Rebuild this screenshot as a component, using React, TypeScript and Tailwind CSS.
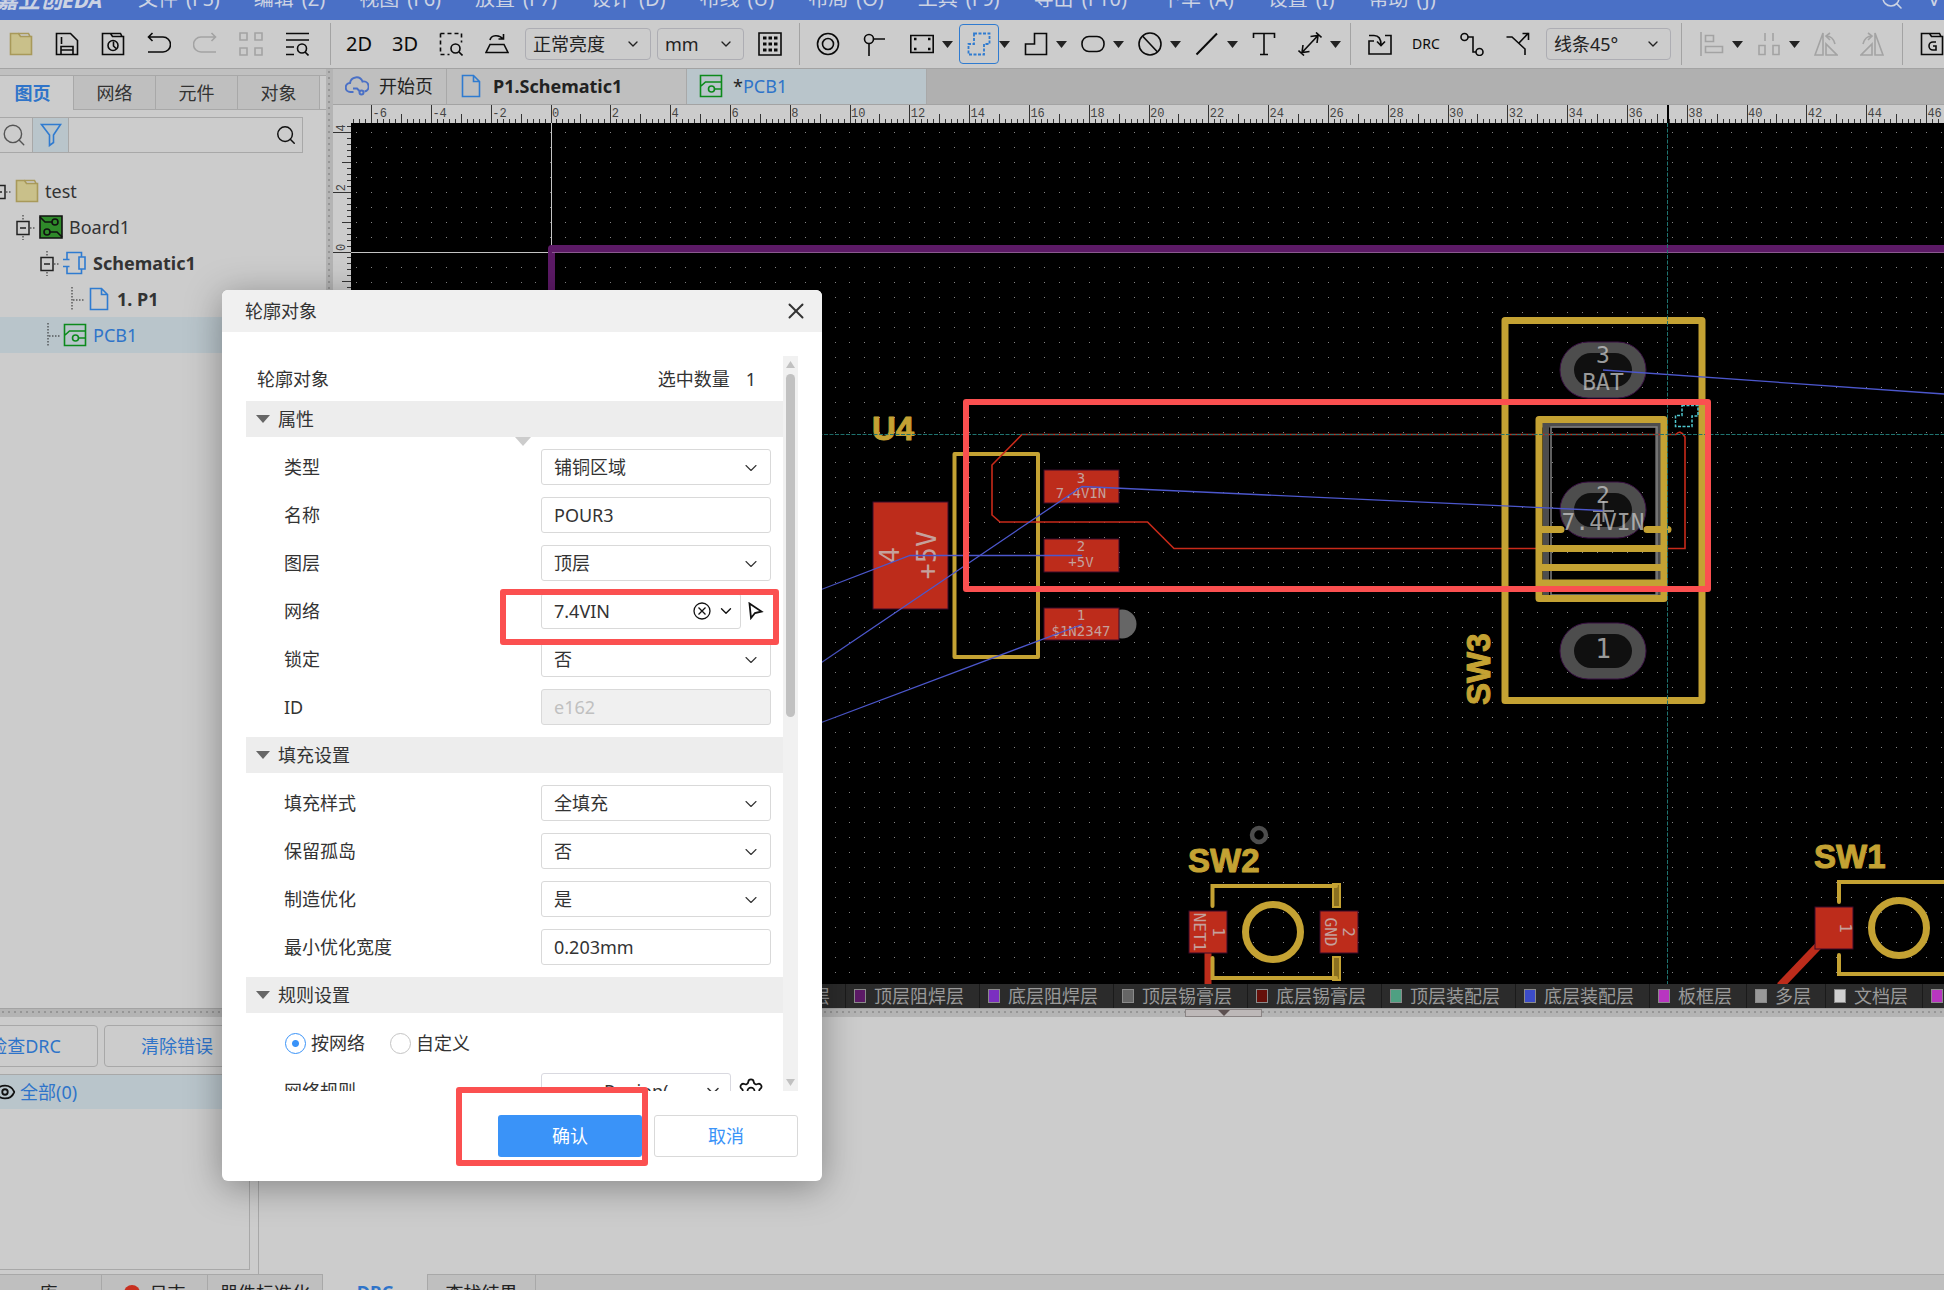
import type { ReactNode } from "react";
import { clsx } from "clsx";
import { ChevronDown, Eye, Search, Settings, X } from "lucide-react";

const MENUS = [
  ["文件", "(F5)"],
  ["编辑", "(Z)"],
  ["视图", "(F6)"],
  ["放置", "(F7)"],
  ["设计", "(D)"],
  ["布线", "(U)"],
  ["布局", "(O)"],
  ["工具", "(F9)"],
  ["导出", "(F10)"],
  ["下单", "(A)"],
  ["设置", "(I)"],
  ["帮助", "(J)"],
];

const LAYERS = [
  { name: "顶层", color: "#c02c1c" },
  { name: "底层", color: "#3040c0" },
  { name: "顶层丝印层", color: "#c4a233" },
  { name: "底层丝印层", color: "#6a7a3a" },
  { name: "顶层阻焊层", color: "#5c1a66" },
  { name: "底层阻焊层", color: "#7b2fc0" },
  { name: "顶层锡膏层", color: "#666666" },
  { name: "底层锡膏层", color: "#66100a" },
  { name: "顶层装配层", color: "#4fa082" },
  { name: "底层装配层", color: "#3c4cc8" },
  { name: "板框层", color: "#b836c0" },
  { name: "多层", color: "#999999" },
  { name: "文档层", color: "#cfcfcf" },
  { name: "机械层", color: "#b836c0" },
];

const UNIT = 29.9; // px per mm

function Glyph({ children, className }: { children: ReactNode; className?: string }) {
  return (
    <svg
      viewBox="0 0 24 24"
      className={clsx("h-6 w-6 shrink-0", className)}
      fill="none"
      stroke="currentColor"
      strokeWidth="1.6"
      aria-hidden="true"
    >
      {children}
    </svg>
  );
}

function FolderIcon() {
  return (
    <Glyph>
      <path d="M1.5 1.5h8l2 3h11v18h-21z" fill="#c9c08a" stroke="#a8995a" />
      <path d="M9.5 1.5h10l1.5 3" stroke="#a8995a" />
    </Glyph>
  );
}

function PageIcon() {
  return (
    <Glyph className="text-[#2f7bd0]">
      <path d="M3.5 1.5h11l6 6v15h-17zM14.5 1.5v6h6" />
    </Glyph>
  );
}

function PcbIcon() {
  return (
    <Glyph className="text-[#0c8a1c]">
      <path d="M1.5 1.5h21v21h-21zM1.5 12.500l5-4.500h16M15.500 15h7" />
      <circle cx="12.500" cy="15" r="3" />
    </Glyph>
  );
}

function ToolButton({ label, children, disabled, wide = true }: {
  label: string;
  children: ReactNode;
  disabled?: boolean;
  wide?: boolean;
}) {
  return (
    <button
      type="button"
      aria-label={label}
      disabled={disabled}
      className={clsx(
        "flex h-10 shrink-0 items-center justify-center",
        wide ? "w-[46px]" : "w-10",
        disabled ? "text-[#a3a3a3]" : "text-[#0a0a0a]",
      )}
    >
      {children}
    </button>
  );
}

function DropTool({ label, children, active, disabled }: {
  label: string;
  children: ReactNode;
  active?: boolean;
  disabled?: boolean;
}) {
  return (
    <div className="flex w-[57px] shrink-0 items-center">
      <button
        type="button"
        aria-label={label}
        disabled={disabled}
        className={clsx(
          "flex h-10 w-10 items-center justify-center rounded border",
          active ? "border-[#2f7bd0] text-[#2f7bd0]" : "border-transparent",
          !active && (disabled ? "text-[#a3a3a3]" : "text-[#0a0a0a]"),
        )}
      >
        {children}
      </button>
      <svg viewBox="0 0 11 7" className="h-[7px] w-[11px] shrink-0" aria-hidden="true">
        <path d="M0 0h11L5.500 7z" fill="#222" />
      </svg>
    </div>
  );
}

function Divider({ className }: { className: string }) {
  return <div className={clsx("h-[42px] w-px shrink-0 bg-[#a3a3a3]", className)} />;
}

function ToolSelect({ label, value, className }: { label: string; value: string; className: string }) {
  return (
    <div className={clsx("grid h-8 shrink-0 items-center", className)}>
      <select
        aria-label={label}
        className="col-start-1 row-start-1 h-8 w-full appearance-none rounded border border-[#adadb3] pl-[7px] text-lg leading-7 text-[#222]"
      >
        <option>{value}</option>
      </select>
      <ChevronDown
        className="pointer-events-none col-start-1 row-start-1 mr-2.5 h-4 w-4 justify-self-end text-[#222]"
        strokeWidth={2}
      />
    </div>
  );
}

function MenuBar() {
  return (
    <header className="flex h-5 shrink-0 items-end overflow-hidden bg-[#4a70c6] text-[#ccd3e3]">
      <div className="flex h-[42px] w-full shrink-0 items-center whitespace-nowrap">
        <div className="-ml-1 w-[142px] shrink-0 text-[22px] font-bold italic">嘉立创EDA</div>
        <nav className="flex gap-[34px] text-xl">
          {MENUS.map(([name, key]) => (
            <button key={name} type="button" className="flex shrink-0 gap-2">
              <span>{name}</span>
              <span>{key}</span>
            </button>
          ))}
        </nav>
        <Search className="mr-6 ml-auto h-6 w-6 shrink-0" strokeWidth={1.6} />
        <span className="mr-1 text-xl">V</span>
      </div>
    </header>
  );
}

function Toolbar() {
  return (
    <div className="flex h-[49px] shrink-0 items-center overflow-hidden border-b border-[#a3a3a3] bg-[#cccccc]">
      <div className="-ml-0.5 flex shrink-0">
        <ToolButton label="打开"><FolderIcon /></ToolButton>
        <ToolButton label="保存">
          <Glyph><path d="M1.500 1.500h14l7 7v14h-21zM6 22v-7.500h12V22M6 18h12M6.500 5v7" /></Glyph>
        </ToolButton>
        <ToolButton label="历史">
          <Glyph>
            <path d="M1.500 1.500h8l2 3h11v18h-21zM9.500 1.500h10l1.500 3M12.500 9.500v4.500l2.500 2.500" />
            <circle cx="12" cy="13.500" r="5" />
          </Glyph>
        </ToolButton>
        <ToolButton label="撤销">
          <Glyph><path d="M1 5h15a6.500 6.500 0 0 1 0 15H1M5.500 1 1.500 5l4 4" /></Glyph>
        </ToolButton>
        <ToolButton label="重做" disabled>
          <Glyph><path d="M23 5H8a6.500 6.500 0 0 0 0 15h15M18.500 1l4 4-4 4" /></Glyph>
        </ToolButton>
        <ToolButton label="对齐" disabled>
          <Glyph><path d="M1 1h7v7H1zM16 1h7v7h-7zM1 16h7v7H1zM16 16h7v7h-7z" /></Glyph>
        </ToolButton>
        <ToolButton label="查找">
          <Glyph>
            <path d="M1 1.500h23M1 8h23M1 15h8M1 22.500h8M20 20l3.500 3.500" />
            <circle cx="17" cy="16.500" r="4.500" />
          </Glyph>
        </ToolButton>
      </div>
      <Divider className="mr-[5px] ml-2.5" />
      <ToolButton label="2D视图"><span className="text-xl">2D</span></ToolButton>
      <ToolButton label="3D视图"><span className="text-xl">3D</span></ToolButton>
      <ToolButton label="框选缩放">
        <Glyph>
          <path d="M1.500 1.500h21v9M1.500 1.500v21h9" strokeDasharray="4 3" />
          <circle cx="16.500" cy="16.500" r="4.500" />
          <path d="m20 20 3.500 3.500" />
        </Glyph>
      </ToolButton>
      <ToolButton label="翻转">
        <Glyph><path d="M5 12.500h14l4 8H1zM5 8c1-5 9-6 13-1M18.500 2v5h-5" /></Glyph>
      </ToolButton>
      <ToolSelect label="亮度" value="正常亮度" className="ml-[5px] w-[126px]" />
      <ToolSelect label="单位" value="mm" className="mr-[3px] ml-1.5 w-[87px]" />
      <ToolButton label="网格">
        <Glyph>
          <path d="M1 1h22v22H1z" />
          <path d="M5 6h15M5 12h15M5 18h15" strokeWidth="3" strokeDasharray="3.500 2" />
        </Glyph>
      </ToolButton>
      <Divider className="mr-[5px] ml-1.5" />
      <ToolButton label="焊盘">
        <Glyph><circle cx="12" cy="12" r="10.500" /><circle cx="12" cy="12" r="5.500" /></Glyph>
      </ToolButton>
      <ToolButton label="过孔">
        <Glyph><circle cx="7" cy="7" r="4.500" /><path d="M11.500 7H23M7 11.500V24" /></Glyph>
      </ToolButton>
      <div className="ml-[5px] flex shrink-0">
        <DropTool label="铺铜">
          <Glyph>
            <path d="M.8 3.500h22.400v17H.8z" />
            <path d="M4 7h2.500M18 7h2.500M4 17h2.500M18 17h2.500" strokeWidth="2.500" />
          </Glyph>
        </DropTool>
        <DropTool label="铺铜区域" active>
          <Glyph><path d="M7 1.500h15.500V12H17v10.500H1.500V12H7z" strokeDasharray="3 1.500" strokeWidth="1.800" /></Glyph>
        </DropTool>
        <DropTool label="填充区域">
          <Glyph><path d="M10.500 1.500h12v21h-21V12h9z" /></Glyph>
        </DropTool>
        <DropTool label="禁止区域">
          <Glyph><rect x="1" y="4.500" width="22" height="15" rx="7" /></Glyph>
        </DropTool>
        <DropTool label="圆形">
          <Glyph><circle cx="12" cy="12" r="11" /><path d="m4.500 4 15 16" /></Glyph>
        </DropTool>
        <DropTool label="线条">
          <Glyph><path d="M1.500 22.500 22 1.500" strokeWidth="2" /></Glyph>
        </DropTool>
      </div>
      <ToolButton label="文本" wide={false}>
        <Glyph><path d="M1.500 6V1.500h21V6M12 1.500v21M8 22.500h8" /></Glyph>
      </ToolButton>
      <div className="ml-1.5 flex shrink-0">
        <DropTool label="尺寸">
          <Glyph>
            <path d="M4 20.500 20 3.500M12.500 4.500l7.500-1-1 7.500M11.500 19.500 4 20.500l1-7.500M18 .5l5.500 5M.5 18.500 6 23.500" />
          </Glyph>
        </DropTool>
      </div>
      <Divider className="mr-1.5 ml-[3px]" />
      <ToolButton label="导入变更">
        <Glyph><path d="M6 9H1v13h22V3.500h-6M1 3.500h5c5 0 7 3 7 9.500M9 9.500l4 4 4-4" /></Glyph>
      </ToolButton>
      <ToolButton label="检查DRC"><span className="text-sm">DRC</span></ToolButton>
      <ToolButton label="布线">
        <Glyph>
          <circle cx="4.500" cy="5" r="3.500" /><circle cx="19.500" cy="20" r="3.500" />
          <path d="M8 5h5v15h3" />
        </Glyph>
      </ToolButton>
      <ToolButton label="拉伸导线">
        <Glyph><path d="M.5 5h5.500l13 12v6M13 11 22.500 1M16.500 1.500h6v6.500" /></Glyph>
      </ToolButton>
      <ToolSelect label="线条角度" value="线条45°" className="ml-[5px] w-[125px]" />
      <Divider className="mr-2.5 ml-2.5" />
      <div className="flex shrink-0">
        <DropTool label="左对齐" disabled>
          <Glyph><path d="M1 0v24M5.500 3.500h8v6h-8zM5.500 14.500h17v6h-17z" /></Glyph>
        </DropTool>
        <DropTool label="分布" disabled>
          <Glyph><path d="M8 1v8M16 1v8M2 13.500h6v9H2zM16 13.500h6v9h-6z" /></Glyph>
        </DropTool>
      </div>
      <ToolButton label="左旋" wide={false} disabled>
        <Glyph><path d="M9 1v22H1zM12 12v11h11zM12 4c5 0 8 4 9 8M16 1l-4 3 4 4" /></Glyph>
      </ToolButton>
      <div className="ml-1.5 flex shrink-0">
        <ToolButton label="右旋" wide={false} disabled>
          <Glyph><path d="M15 1v22h8zM12 12v11H1zM12 4c-5 0-8 4-9 8M8 1l4 3-4 4" /></Glyph>
        </ToolButton>
      </div>
      <Divider className="mr-1.5 ml-2.5" />
      <ToolButton label="Gerber">
        <Glyph>
          <path d="M1.500 1.500h8l2 3h11v18h-21zM9.500 1.500h10l1.500 3M16 10h-3a4 4 0 0 0 0 8h3v-4h-3" />
        </Glyph>
      </ToolButton>
    </div>
  );
}

function Expander() {
  return (
    <svg viewBox="0 0 20 36" className="h-9 w-5 shrink-0" fill="none" stroke="#222" aria-hidden="true">
      <path d="M1 12.500h12v13H1zM4 19h6" strokeWidth="1.500" />
      <path d="M14 19h6M7 6v6M7 27v4" strokeDasharray="1.500 1.500" />
    </svg>
  );
}

function Branch() {
  return (
    <svg viewBox="0 0 16 36" className="h-9 w-4 shrink-0" fill="none" stroke="#222" aria-hidden="true">
      <path d="M1 6v24M2 19h12" strokeDasharray="1.500 1.500" />
    </svg>
  );
}

function Sidebar() {
  return (
    <aside className="flex w-[326px] shrink-0 flex-col bg-[#cccccc] text-lg text-[#333]">
      <div className="h-1.5 shrink-0 bg-[#c0c0c0]" />
      <div role="tablist" className="flex h-[35px] shrink-0 border-t border-[#a8a8a8]">
        <button role="tab" aria-selected="true" type="button" className="w-[74px] border-r border-[#a8a8a8] pr-2 font-bold text-[#2f74c9]">
          图页
        </button>
        {["网络", "元件", "对象"].map((tab) => (
          <button
            key={tab}
            role="tab"
            aria-selected="false"
            type="button"
            className="w-[82px] border-r border-b border-[#a8a8a8] bg-[#bfbfbf]"
          >
            {tab}
          </button>
        ))}
        <div className="flex-1 border-b border-[#a8a8a8]" />
      </div>
      <div className="mt-[7px] mr-[23px] flex h-9 shrink-0 border-y border-r border-[#a8a8a8]">
        <button type="button" aria-label="搜索" className="flex w-8 items-center pl-px text-[#555]">
          <Search className="h-[26px] w-[26px]" strokeWidth={1.3} />
        </button>
        <button type="button" aria-label="筛选" className="flex w-[37px] items-center justify-center border-x border-[#a8a8a8] bg-[#b9c5cb] text-[#2f7bd0]">
          <Glyph><path d="M2.500 1.500h19L14.500 12v7.500l-4 3V12z" /></Glyph>
        </button>
        <input aria-label="搜索内容" className="min-w-0 flex-1 px-2 outline-none" />
        <button type="button" aria-label="执行搜索" className="flex w-[27px] items-center text-[#111]">
          <Search className="h-[22px] w-[22px]" strokeWidth={1.6} />
        </button>
      </div>
      <ul className="mt-5">
        <li className="-ml-2 flex h-9 items-center">
          <Expander />
          <span className="mr-1.5 ml-[3px] flex"><FolderIcon /></span>test
        </li>
        <li className="ml-4 flex h-9 items-center">
          <Expander />
          <span className="mr-1.5 ml-[3px] flex">
            <Glyph className="text-[#111]">
              <path d="M1 1h22v22H1z" fill="#2f8a2a" />
              <path d="M1 2l5 5h7M23 22l-5-5h-7" />
              <circle cx="16" cy="7" r="3" /><circle cx="8" cy="17" r="3" />
            </Glyph>
          </span>
          Board1
        </li>
        <li className="ml-10 flex h-9 items-center font-bold">
          <Expander />
          <span className="mr-1.5 ml-[3px] flex">
            <Glyph className="text-[#2f7bd0]">
              <path d="M4 8V1.500h14.500V6M4 16v6.500h14.500V18M0 8.500h6.500M0 15.500h6.500M16 6h6v12h-6z" />
            </Glyph>
          </span>
          Schematic1
        </li>
        <li className="ml-[71px] flex h-9 items-center font-bold">
          <Branch />
          <span className="mr-1.5 flex"><PageIcon /></span>1. P1
        </li>
        <li className="flex h-9 items-center bg-[#b9c5cb] pl-[47px] text-[#2f74c9]">
          <Branch />
          <span className="mr-1.5 flex"><PcbIcon /></span>PCB1
        </li>
      </ul>
    </aside>
  );
}

function DocumentTabs() {
  return (
    <div role="tablist" className="flex h-9 shrink-0 border-b border-[#a3a3a3] bg-[#b0b0b0] text-lg text-[#222]">
      <button role="tab" aria-selected="false" type="button" className="flex w-[114px] shrink-0 items-center gap-2.5 border-r border-[#a8a8a8] bg-[#bfbfbf] pb-0.5 pl-3">
        <Glyph className="text-[#4a70c6]">
          <path d="M8.500 18H5.500a4.500 4.500 0 0 1-.5-9A6.500 6.500 0 0 1 17.500 7.500a5 5 0 0 1 2 10" strokeWidth="2" />
          <path d="M8 14.500h4l3 3" strokeWidth="2" />
          <circle cx="16.500" cy="18.500" r="2" strokeWidth="2" />
        </Glyph>
        开始页
      </button>
      <button role="tab" aria-selected="false" type="button" className="flex w-60 shrink-0 items-center gap-2.5 border-r border-[#a8a8a8] bg-[#bfbfbf] pb-0.5 pl-3 font-bold">
        <PageIcon />
        P1.Schematic1
      </button>
      <button role="tab" aria-selected="true" type="button" className="flex w-60 shrink-0 items-center gap-2.5 border-r border-[#a8a8a8] bg-[#b9c5cb] pb-0.5 pl-3 text-[#2f74c9]">
        <PcbIcon />
        <span><span className="text-[#222]">*</span>PCB1</span>
      </button>
    </div>
  );
}

function tickLength(i: number) {
  if (i % 10 === 0) return 18;
  return i % 5 === 0 ? 9 : 4;
}

function HorizontalRuler() {
  const origin = 218;
  const ticks = Array.from({ length: 270 }, (_, n) => n - 33);
  return (
    <svg className="h-[18px] w-full shrink-0 bg-[#cccccc]" aria-hidden="true">
      {ticks.map((i) => {
        const x = Math.floor(origin + (i * UNIT) / 5) + 0.5;
        return <line key={i} x1={x} x2={x} y1={18 - tickLength(i)} y2={18} stroke="#333" />;
      })}
      {ticks.filter((i) => i % 10 === 0).map((i) => (
        <text
          key={i}
          x={origin + (i * UNIT) / 5 + 1}
          y="12"
          fontFamily="'Liberation Mono', monospace"
          fontSize="12"
          fill="#444"
        >
          {i / 5}
        </text>
      ))}
      <line x1="1335" x2="1335" y1="0" y2="18" stroke="#000" strokeWidth="2" />
    </svg>
  );
}

function VerticalRuler() {
  const origin = 129;
  const ticks = Array.from({ length: 140 }, (_, n) => n - 21);
  return (
    <svg className="h-full w-[18px] shrink-0 bg-[#cccccc]" aria-hidden="true">
      {ticks.map((i) => {
        const y = Math.floor(origin + (i * UNIT) / 5) + 0.5;
        return <line key={i} y1={y} y2={y} x1={18 - tickLength(i)} x2={18} stroke="#333" />;
      })}
      {ticks.filter((i) => i % 10 === 0).map((i) => (
        <text
          key={i}
          transform={`translate(12 ${origin + (i * UNIT) / 5 - 1}) rotate(-90)`}
          fontFamily="'Liberation Mono', monospace"
          fontSize="12"
          fill="#444"
        >
          {-i / 5}
        </text>
      ))}
    </svg>
  );
}

// one dashed line per column keeps every dot on a whole pixel
function GridDots() {
  const columns = Array.from({ length: 180 }, (_, n) => Math.floor(5.6 + (n * UNIT) / 2) + 0.5);
  return (
    <g stroke="#858585" strokeDasharray="1 14">
      {columns.map((x) => (
        <line key={x} x1={x} x2={x} y1={9} y2={1400} />
      ))}
    </g>
  );
}

function OvalPad({ cx, cy }: { cx: number; cy: number }) {
  return (
    <g>
      <rect x={cx - 43} y={cy - 28} width="86" height="56" rx="28" fill="#4d4d4d" stroke="#3a1044" />
      <rect x={cx - 29} y={cy - 17} width="58" height="34" rx="17" fill="#101010" />
    </g>
  );
}

function SmdPad({ x, y, w, h }: { x: number; y: number; w: number; h: number }) {
  return <rect x={x} y={y} width={w} height={h} fill="#bd2c1b" stroke="#3a0a2a" />;
}

function PadText({ x, y, size, rotate = 0, children }: {
  x: number;
  y: number;
  size: number;
  rotate?: number;
  children: ReactNode;
}) {
  return (
    <text
      transform={`translate(${x} ${y}) rotate(${rotate})`}
      textAnchor="middle"
      fontFamily="'DejaVu Sans Mono', monospace"
      fontSize={size}
      fill="#c8c8c8"
      fillOpacity="0.75"
    >
      {children}
    </text>
  );
}

function Designator({ x, y, rotate = 0, children }: { x: number; y: number; rotate?: number; children: ReactNode }) {
  return (
    <text
      transform={`translate(${x} ${y}) rotate(${rotate})`}
      fontFamily="'Liberation Sans', sans-serif"
      fontWeight="bold"
      fontSize="33"
      fill="#c4a233"
      stroke="#c4a233"
      strokeLinejoin="round"
    >
      {children}
    </text>
  );
}

function PcbCanvas() {
  return (
    <svg className="h-full min-w-0 flex-1 bg-black" role="img" aria-label="PCB画布">
      <GridDots />
      <g transform="translate(-351 -123)" fill="none">
        <path d="M551.500 123V245M351 252.500H551" stroke="#c4c4c4" />
        <path d="M551.500 984V248.500H2600" stroke="#5c1a66" strokeWidth="7" strokeLinejoin="round" />
        <path d="M552 252.500H2600" stroke="#8a5a90" />

        {/* U4 */}
        <circle cx="1122" cy="624" r="14.500" fill="#666" />
        <g stroke="#c4a233" strokeWidth="4" strokeLinejoin="round">
          <rect x="954.500" y="454" width="83.500" height="203" />
        </g>
        <SmdPad x={873} y={502} w={75} h={107} />
        <SmdPad x={1044} y={470} w={75} h={33} />
        <SmdPad x={1044} y={539} w={75} h={33} />
        <SmdPad x={1044} y={608} w={75} h={32} />
        <Designator x={872} y={440}>U4</Designator>

        {/* SW3 */}
        <path d="M1546 423V595M1658 423V595M1542 424.500H1661" stroke="#4d4d4d" strokeWidth="6" />
        <rect x="1551" y="427" width="106" height="168" stroke="#808080" strokeWidth="1.500" />
        <OvalPad cx={1603} cy={370} />
        <OvalPad cx={1603} cy={510} />
        <OvalPad cx={1603} cy={651} />
        <path d="M1593 511h21M1603.500 501v21" stroke="#8a8a8a" strokeWidth="2" />

        {/* pour outline */}
        <path
          d="M1022 434.500 992 465V515L1000 522H1147.500L1174 548.500H1685V437Q1680 429 1676 434.500Z"
          stroke="#c82a1a"
          strokeWidth="1.600"
        />
        <g stroke="#c4a233" strokeWidth="7" strokeLinejoin="round">
          <rect x="1505" y="320.500" width="197" height="380" />
          <rect x="1539" y="419.500" width="125" height="179" />
          <path d="M1539 548.500h125M1539 567.500h125M1539 583h125" />
          <path d="M1542 529.500h19M1647 529.500h21" strokeLinecap="round" />
        </g>
        <Designator x={1490} y={705} rotate={-90}>SW3</Designator>

        {/* SW2 */}
        <circle cx="1259" cy="835" r="7" stroke="#4d4d4d" strokeWidth="4.500" />
        <Designator x={1188} y={872}>SW2</Designator>
        <path d="M1208 950V984" stroke="#bd2c1b" strokeWidth="7" />
        <SmdPad x={1189} y={911} w={38} h={42} />
        <SmdPad x={1320} y={911} w={38} h={42} />
        <g stroke="#c4a233" strokeWidth="4" strokeLinecap="round">
          <rect x="1333" y="884" width="7" height="23" fill="#8a7020" strokeWidth="2" />
          <rect x="1333" y="957" width="7" height="23" fill="#8a7020" strokeWidth="2" />
          <path d="M1336 886H1212.500V906M1336 978H1212.500V958" />
          <circle cx="1273" cy="932" r="27.500" strokeWidth="7" />
        </g>

        {/* SW1 */}
        <Designator x={1814} y={868}>SW1</Designator>
        <path d="M1822 942 1780 986" stroke="#bd2c1b" strokeWidth="8" />
        <SmdPad x={1815} y={907} w={38} h={42} />
        <g stroke="#c4a233" strokeWidth="4" strokeLinecap="round">
          <path d="M1962 882H1839V902M1962 974H1839V955" />
          <circle cx="1899" cy="928" r="27.500" strokeWidth="7" />
        </g>

        <PadText x={1081} y={483} size={14}>3</PadText>
        <PadText x={1081} y={498} size={14}>7.4VIN</PadText>
        <PadText x={1081} y={551} size={14}>2</PadText>
        <PadText x={1081} y={567} size={14}>+5V</PadText>
        <PadText x={1081} y={620} size={14}>1</PadText>
        <PadText x={1081} y={636} size={14}>$1N2347</PadText>
        <PadText x={899} y={555} size={27} rotate={-90}>4</PadText>
        <PadText x={936} y={555} size={27} rotate={-90}>+5V</PadText>
        <PadText x={1603} y={363} size={23}>3</PadText>
        <PadText x={1603} y={390} size={23}>BAT</PadText>
        <PadText x={1603} y={503} size={23}>2</PadText>
        <PadText x={1603} y={530} size={23}>7.4VIN</PadText>
        <PadText x={1603} y={658} size={26}>1</PadText>
        <PadText x={1194} y={932} size={16} rotate={90}>NET1</PadText>
        <PadText x={1213} y={932} size={16} rotate={90}>1</PadText>
        <PadText x={1325} y={932} size={16} rotate={90}>GND</PadText>
        <PadText x={1343} y={932} size={16} rotate={90}>2</PadText>
        <PadText x={1840} y={928} size={16} rotate={90}>1</PadText>

        {/* ratlines */}
        <g stroke="#4c57cc" strokeWidth="1.300">
          <path d="M820 590 910 555.500H1082" />
          <path d="M820 663.500 1082 486.500 1603 510.500" />
          <path d="M820 723 1082 624.500" />
          <path d="M1603 370 1944 394 2600 440" />
        </g>

        <path d="M351 434.500H2600M1667.500 123V984" stroke="#1f7470" strokeDasharray="4 1.500" />
        <path d="M1682 405.500h16V416h-6v10.500h-16.500V415.500h6.500z" stroke="#4fc8d0" strokeWidth="1.500" strokeDasharray="3 1.500" />
        <rect x="966" y="402" width="742" height="187" stroke="#fb5050" strokeWidth="6" strokeLinejoin="round" />
      </g>
    </svg>
  );
}

function LayerBar() {
  return (
    <div className="flex h-6 shrink-0 overflow-hidden bg-[#2b2b2b] pl-[87px] text-lg leading-6 text-[#999]">
      {LAYERS.map((layer) => (
        <button
          key={layer.name}
          type="button"
          className={clsx(
            "flex shrink-0 items-center gap-2 border-r border-[#1a1a1a] pl-2",
            layer.name.length > 3 ? "pr-[15px]" : "pr-3.5",
          )}
        >
          <span className="h-3.5 w-3 border border-[#8a8a8a]" style={{ backgroundColor: layer.color }} />
          {layer.name}
        </button>
      ))}
    </div>
  );
}

const dots = "bg-[#b4b4b4] bg-[radial-gradient(circle,#969696_1px,transparent_1px)] bg-[size:6px_6px]";

function BottomPanel() {
  return (
    <section className="flex h-[273px] shrink-0 flex-col bg-[#cccccc] text-lg">
      <div className="flex min-h-0 flex-1">
        <div className="flex w-[259px] shrink-0 flex-col overflow-hidden border-r border-[#a8a8a8] pb-1">
          <div className="flex flex-1 flex-col">
            <div className="-ml-12 flex gap-1.5 pt-2 text-[#2f74c9]">
              <button type="button" className="h-[42px] w-[146px] rounded border border-[#a8a8a8]">检查DRC</button>
              <button type="button" className="h-[42px] w-[146px] rounded border border-[#a8a8a8]">清除错误</button>
            </div>
            <div className="mt-[7px] mr-2 flex flex-1 flex-col border-t border-r border-b border-[#a8a8a8]">
              <button type="button" className="flex h-[34px] items-center gap-1 bg-[#b9c5cb] text-[#2f74c9]">
                <Eye className="-ml-1.5 h-[22px] w-[22px]" color="#111" strokeWidth={2} />
                全部(0)
              </button>
            </div>
          </div>
        </div>
        <div className="flex-1" />
      </div>
      <div role="tablist" className="flex h-4 shrink-0 overflow-hidden text-[#222]">
        <BottomTab className="w-[102px] pr-1">库</BottomTab>
        <BottomTab className="w-[106px] gap-2.5">
          <span className="h-4 w-4 rounded-full bg-[#c83020]" />
          日志
        </BottomTab>
        <BottomTab className="w-[115px]">器件标准化</BottomTab>
        <button role="tab" aria-selected="true" type="button" className="flex h-9 w-[105px] items-center justify-center border-r border-[#a8a8a8] font-bold text-[#2f74c9]">
          DRC
        </button>
        <BottomTab className="w-[108px]">查找结果</BottomTab>
        <div className="flex-1 border-t border-[#a8a8a8] bg-[#bfbfbf]" />
      </div>
    </section>
  );
}

function BottomTab({ className, children }: { className: string; children: ReactNode }) {
  return (
    <button
      role="tab"
      aria-selected="false"
      type="button"
      className={clsx("flex h-9 shrink-0 items-center justify-center border-t border-r border-[#a8a8a8] bg-[#bfbfbf]", className)}
    >
      {children}
    </button>
  );
}

const control = "h-9 w-full rounded-[3px] border border-[#d9d9d9] bg-white px-3 text-lg leading-[34px] text-[#333]";

function Field({ id, label, children }: { id: string; label: string; children: ReactNode }) {
  return (
    <div className="flex h-9 items-center">
      <label htmlFor={id} className="flex-1">{label}</label>
      <div className="flex w-[230px] items-center">{children}</div>
    </div>
  );
}

function FieldSelect({ id, value }: { id: string; value: string }) {
  return (
    <div className="grid w-full items-center">
      <select id={id} className={clsx(control, "col-start-1 row-start-1 appearance-none")}>
        <option>{value}</option>
      </select>
      <ChevronDown className="pointer-events-none col-start-1 row-start-1 mt-0.5 mr-2.5 h-5 w-5 justify-self-end" strokeWidth={1.300} />
    </div>
  );
}

function SectionHeader({ children }: { children: ReactNode }) {
  return (
    <button type="button" className="flex h-9 w-full shrink-0 items-center gap-2 bg-[#ededed] pl-2.5">
      <svg viewBox="0 0 14 8" className="h-2 w-3.5" aria-hidden="true">
        <path d="M0 0h14L7 8z" fill="#666" />
      </svg>
      {children}
    </button>
  );
}

function OutlineDialog() {
  return (
    <div
      role="dialog"
      aria-label="轮廓对象"
      className="absolute top-[290px] left-[222px] flex h-[891px] w-[600px] flex-col rounded-md bg-white text-lg leading-6 text-[#333] shadow-[0_6px_36px_rgba(0,0,0,0.35)]"
    >
      <div className="flex h-[42px] shrink-0 items-center justify-between rounded-t-md bg-[#f0f0f0] pr-[13px] pl-[23px]">
        轮廓对象
        <button type="button" aria-label="关闭"><X className="h-[26px] w-[26px]" strokeWidth={1.800} /></button>
      </div>

      <div className="mt-6 mr-6 ml-6 flex h-[735px] shrink-0 overflow-hidden">
        <div className="flex-1">
          <div className="flex h-[45px] items-center pr-[27px] pl-[11px]">
            <span className="flex-1">轮廓对象</span>
            <span className="mr-4">选中数量</span>
            <span>1</span>
          </div>
          <SectionHeader>属性</SectionHeader>
          <svg viewBox="0 0 16 9" className="-mb-[9px] ml-[269px] h-[9px] w-4" aria-hidden="true">
            <path d="M0 0h16L8 9z" fill="#ccc" />
          </svg>
          <div className="flex flex-col gap-3 py-3 pr-3 pl-[38px]">
            <Field id="type" label="类型"><FieldSelect id="type" value="铺铜区域" /></Field>
            <Field id="name" label="名称"><input id="name" className={control} defaultValue="POUR3" /></Field>
            <Field id="layer" label="图层"><FieldSelect id="layer" value="顶层" /></Field>
            <Field id="net" label="网络">
              <div className="flex h-9 w-[200px] items-center rounded-[3px] border border-[#d9d9d9] pr-[5px] pl-3">
                <input id="net" className="w-0 flex-1 outline-none" defaultValue="7.4VIN" />
                <button type="button" aria-label="清除" className="mr-1.5 text-[#111]">
                  <svg viewBox="0 0 18 18" className="h-[18px] w-[18px]" fill="none" stroke="currentColor" strokeWidth="1.300">
                    <circle cx="9" cy="9" r="8" />
                    <path d="m5.500 5.500 7 7M12.500 5.500l-7 7" />
                  </svg>
                </button>
                <ChevronDown className="h-[18px] w-[18px] text-[#111]" strokeWidth={1.800} />
              </div>
              <button type="button" aria-label="拾取网络" className="ml-[7px] text-[#111]">
                <svg viewBox="0 0 16 18" className="h-[18px] w-4" fill="none" stroke="currentColor" strokeWidth="1.800">
                  <path d="M1.500 1.500 13.500 9.500 7 11 3 16z" />
                </svg>
              </button>
            </Field>
            <Field id="locked" label="锁定"><FieldSelect id="locked" value="否" /></Field>
            <Field id="pour-id" label="ID">
              <input
                id="pour-id"
                disabled
                className="h-9 w-full rounded-[3px] border border-[#d9d9d9] bg-[#f0f0f0] px-3 text-[#c0c0c0]"
                defaultValue="e162"
              />
            </Field>
          </div>
          <SectionHeader>填充设置</SectionHeader>
          <div className="flex flex-col gap-3 py-3 pr-3 pl-[38px]">
            <Field id="fill" label="填充样式"><FieldSelect id="fill" value="全填充" /></Field>
            <Field id="island" label="保留孤岛"><FieldSelect id="island" value="否" /></Field>
            <Field id="optimize" label="制造优化"><FieldSelect id="optimize" value="是" /></Field>
            <Field id="min-width" label="最小优化宽度">
              <input id="min-width" className={control} defaultValue="0.203mm" />
            </Field>
          </div>
          <SectionHeader>规则设置</SectionHeader>
          <div className="flex h-[60px] items-center gap-[25px] pl-[39px]">
            <label className="flex items-center gap-[5px]">
              <input
                type="radio"
                name="rule"
                defaultChecked
                className="h-[21px] w-[21px] appearance-none rounded-full border border-[#c4c4c4] checked:border-[#3a93f8] checked:bg-[radial-gradient(circle,#3a93f8_3px,transparent_4px)]"
              />
              按网络
            </label>
            <label className="flex items-center gap-[5px]">
              <input type="radio" name="rule" className="h-[21px] w-[21px] appearance-none rounded-full border border-[#c4c4c4]" />
              自定义
            </label>
          </div>
          <div className="pr-3 pl-[38px]">
            <Field id="net-rule" label="网络规则">
              <div className="grid w-[190px] items-center">
                <select id="net-rule" className="col-start-1 row-start-1 h-9 w-full appearance-none rounded-[3px] border border-[#d9d9e0] pl-[62px] text-lg">
                  <option>Region(</option>
                </select>
                <ChevronDown className="pointer-events-none col-start-1 row-start-1 mr-2 h-5 w-5 justify-self-end" strokeWidth={1.800} />
              </div>
              <button type="button" aria-label="规则设置" className="ml-1.5 text-[#111]">
                <Settings className="h-7 w-7" strokeWidth={1.500} />
              </button>
            </Field>
          </div>
        </div>
        <div className="flex w-[15px] shrink-0 flex-col items-center bg-[#f1f1f1] py-[5px]" aria-hidden="true">
          <svg viewBox="0 0 9 7" className="h-[7px] w-[9px] shrink-0"><path d="M0 7h9L4.500 0z" fill="#c1c1c1" /></svg>
          <div className="mt-1.5 h-[343px] w-[9px] rounded-full bg-[#c1c1c1]" />
          <svg viewBox="0 0 9 7" className="mt-auto h-[7px] w-[9px] shrink-0"><path d="M0 0h9L4.500 7z" fill="#c1c1c1" /></svg>
        </div>
      </div>

      <div className="mt-6 mr-6 flex justify-end gap-3">
        <button type="button" className="h-[42px] w-36 rounded-[3px] bg-[#3a93f8] text-white">确认</button>
        <button type="button" className="h-[42px] w-36 rounded-[3px] border border-[#d9d9d9] text-[#3a93f8]">取消</button>
      </div>

      {/* highlight frames */}
      <div className="pointer-events-none absolute top-[299px] left-[278px] h-14 w-[279px] rounded-[3px] border-[6px] border-[#fb5050]" />
      <div className="pointer-events-none absolute top-[797px] left-[234px] h-[79px] w-48 rounded-[3px] border-[6px] border-[#fb5050]" />
    </div>
  );
}

export default function App() {
  return (
    <div className="relative flex h-screen flex-col overflow-hidden bg-[#cccccc] font-['Noto_Sans','Noto_Sans_CJK_SC',sans-serif]">
      <MenuBar />
      <Toolbar />
      <div className="flex min-h-0 flex-1">
        <Sidebar />
        <div className={clsx("w-[7px] shrink-0", dots)} />
        <main className="flex min-w-0 flex-1 flex-col">
          <DocumentTabs />
          <HorizontalRuler />
          <div className="flex min-h-0 flex-1">
            <VerticalRuler />
            <PcbCanvas />
          </div>
          <LayerBar />
        </main>
      </div>
      <div className={clsx("flex h-[9px] shrink-0 items-end border-t border-[#a3a3a3]", dots)}>
        <button type="button" aria-label="收起面板" className="ml-[1185px] flex h-2 w-[77px] items-center justify-center border border-[#8a8484] bg-[#bdb8b8]">
          <svg viewBox="0 0 12 6" className="h-1.5 w-3" aria-hidden="true"><path d="M0 0h12L6 6z" fill="#5c5050" /></svg>
        </button>
      </div>
      <BottomPanel />
      <OutlineDialog />
    </div>
  );
}
